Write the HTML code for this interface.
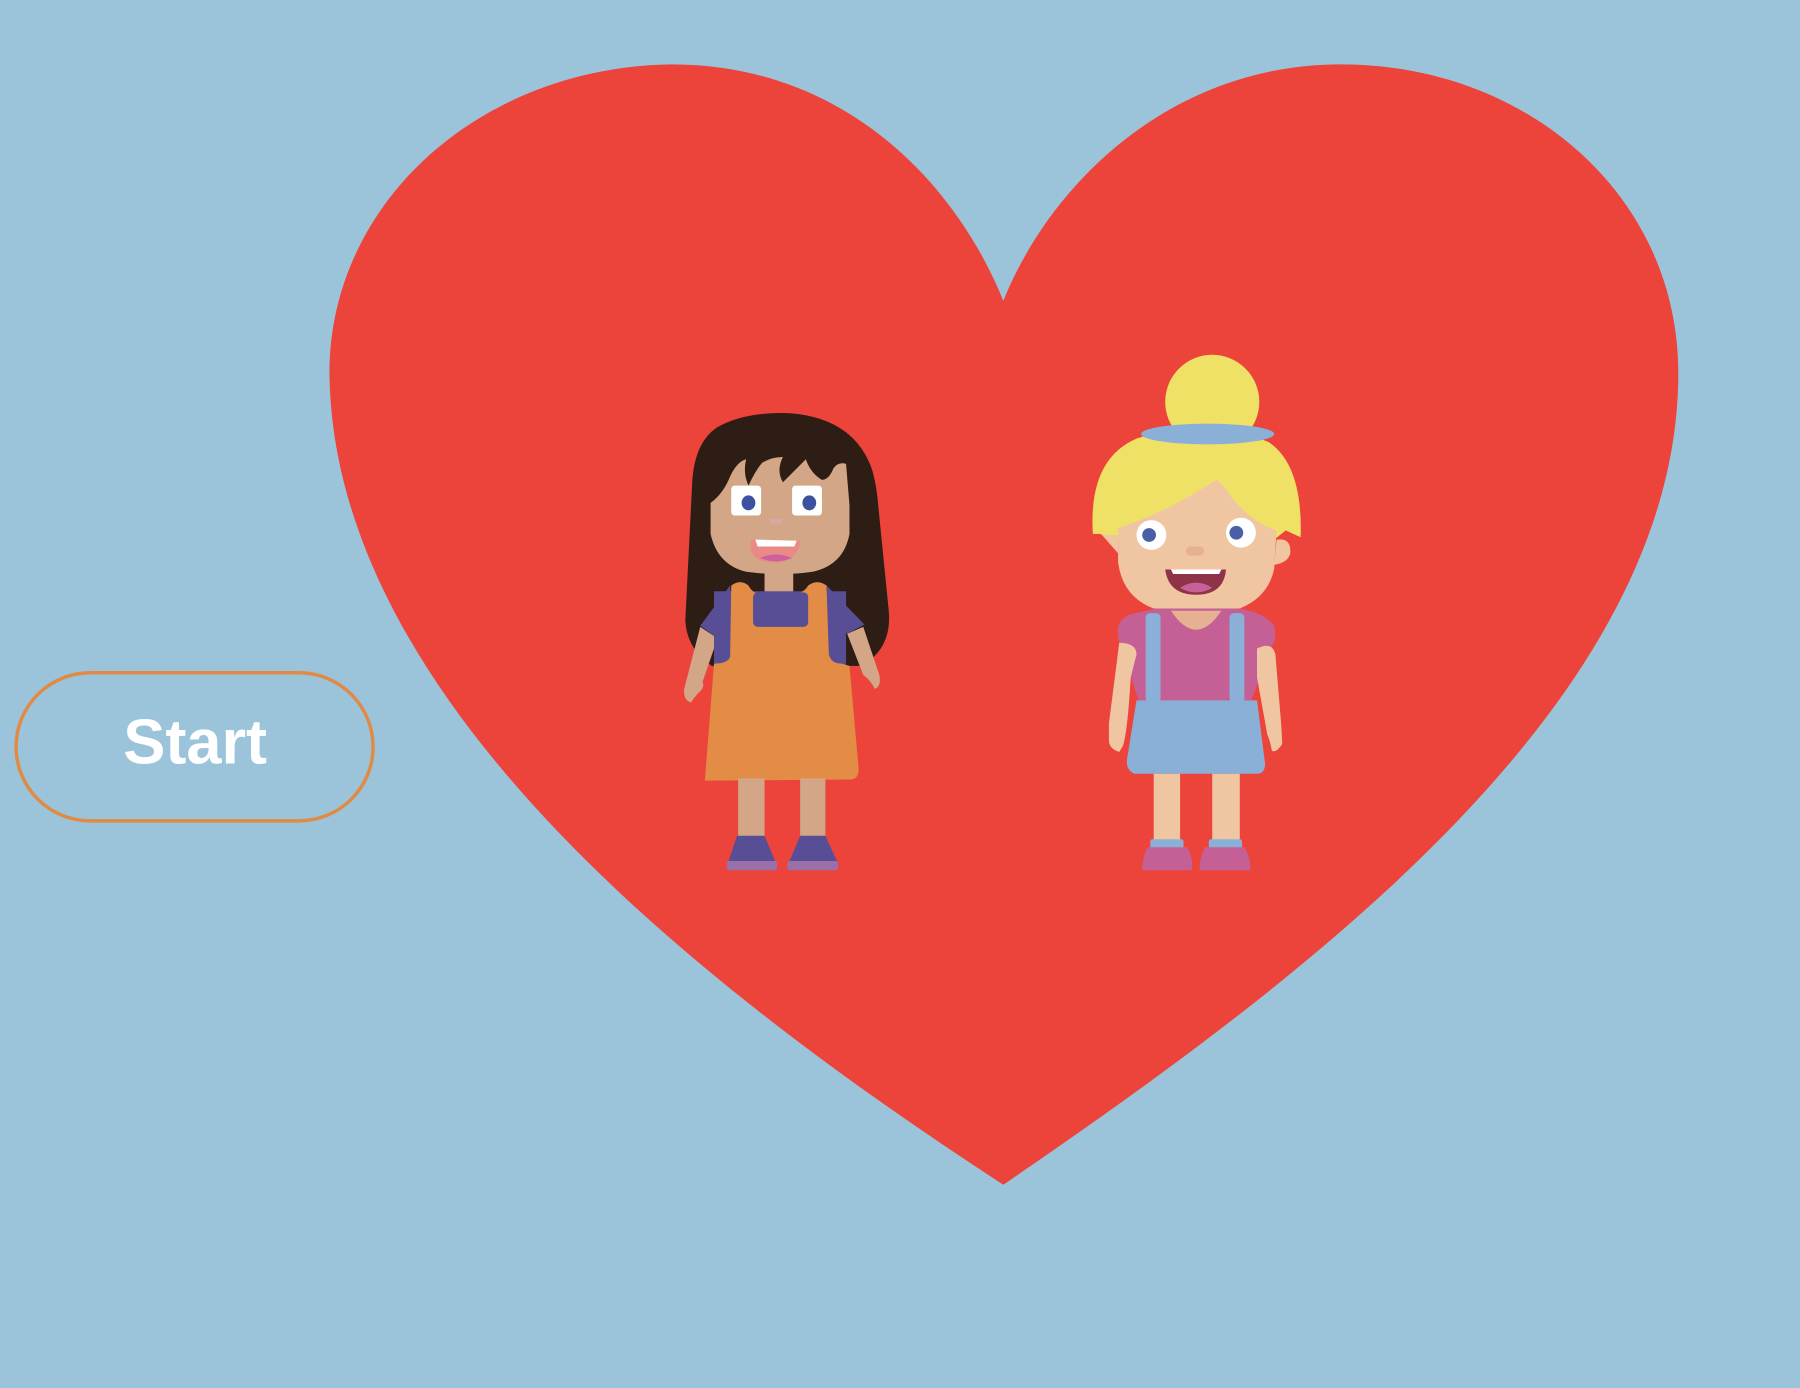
<!DOCTYPE html>
<html><head><meta charset="utf-8"><style>
html,body{margin:0;padding:0;background:#9bc4da;overflow:hidden}
svg{display:block}
</style></head><body>
<svg width="1800" height="1388" viewBox="0 0 1568 1209" xmlns="http://www.w3.org/2000/svg">
<rect width="1568" height="1209" fill="#9bc4da"/>
<path d="M874,262 C835,165 740,56 585,56 C420,58 287,175 287,325 C290,610 610,860 874,1032 C1140,850 1462,610 1462,325 C1462,170 1330,56 1168,56 C1020,56 915,160 874,262 Z" fill="#ec443a"/>
<rect x="14" y="586" width="311" height="129" rx="64.5" fill="none" stroke="#e08a45" stroke-width="3"/>
<text x="170" y="665" text-anchor="middle" font-family="Liberation Sans, sans-serif" font-weight="bold" font-size="55" fill="#fff">Start</text>

<!-- girl 1 -->
<g>
<path d="M603,420 Q605,385 625,372 Q650,358 690,360 Q745,365 760,410 Q764,425 765,440 L774,530 Q778,565 750,580 L620,580 Q598,565 597,540 Z" fill="#2d1d15"/>
<path d="M619,438 Q630,430 636,415 Q642,402 650,400 Q647,412 652,423 Q658,410 664,403 Q672,398 682,398 Q676,410 682,420 L702,400 Q706,412 716,418 Q722,418 726,408 Q730,402 737,404 L740,440 L740,465 Q735,492 708,498 Q680,502 650,498 Q625,492 619,465 Z" fill="#d2a686"/>
<rect x="637" y="423" width="26" height="26" rx="3" fill="#fff"/>
<rect x="690" y="423" width="26" height="26" rx="3" fill="#fff"/>
<ellipse cx="652" cy="438" rx="6" ry="6.5" fill="#3c51a0"/>
<ellipse cx="705" cy="438" rx="6" ry="6.5" fill="#3c51a0"/>
<rect x="671" y="452" width="10" height="4" fill="#dca6a6"/>
<path d="M654,470 L697,471 Q696,488 676,490 Q656,490 654,478 Z" fill="#e98a86"/>
<path d="M658,470 L694,471 L692,476 L660,476 Z" fill="#fff"/>
<path d="M662,486 Q676,480 690,486 Q676,492 662,486 Z" fill="#d0609a"/>
<rect x="666" y="496" width="25" height="22" fill="#d2a686"/>
<path d="M636,510 L610,545 L625,556 L638,540 Z M720,510 L753,544 L738,552 L722,535 Z" fill="#574e95"/>
<path d="M610,546 L625,556 L612,594 Q614,598 610,602 Q604,608 602,612 Q595,610 596,600 Z" fill="#d2a686"/>
<path d="M738,552 L752,546 L766,588 Q768,598 762,600 Q758,592 752,588 Z" fill="#d2a686"/>
<rect x="622" y="515" width="115" height="65" fill="#574e95"/>
<path d="M637,510 Q645,504 652,510 Q656,518 666,518 L690,518 Q700,517 704,510 Q712,504 720,510 L722,570 Q724,578 733,578 L740,580 L748,670 Q748,680 738,679 L614,680 L622,578 Q634,578 636,572 Z" fill="#e38c45"/>
<rect x="656" y="516" width="48" height="30" rx="4" fill="#574e95"/>
<rect x="643" y="678" width="23" height="52" fill="#d2a686"/>
<rect x="697" y="678" width="22" height="52" fill="#d2a686"/>
<path d="M642,728 L666,728 L676,752 L634,752 Z M697,728 L719,728 L730,752 L687,752 Z" fill="#574e95"/>
<rect x="633" y="750" width="44" height="8" rx="2" fill="#9b6fa8"/>
<rect x="686" y="750" width="44" height="8" rx="2" fill="#9b6fa8"/>
</g>

<!-- girl 2 -->
<g>
<circle cx="1056" cy="350" r="41" fill="#efe066"/>
<path d="M952,465 Q948,400 990,382 Q1050,362 1105,385 Q1135,405 1133,468 L1120,462 L1110,470 L970,470 L958,465 Z" fill="#efe066"/>
<ellipse cx="1052" cy="378" rx="58" ry="9" fill="#8ab0d8"/>
<path d="M974,460 Q1010,448 1040,430 L1060,418 Q1068,425 1072,432 Q1090,455 1112,462 L1110,495 Q1105,520 1080,530 L1005,530 Q978,520 974,490 Z" fill="#f0c6a2"/>
<path d="M960,466 L974,482 L974,466 Z" fill="#f0c6a2"/>
<path d="M1112,470 Q1125,468 1124,482 Q1122,490 1110,492 Z" fill="#f0c6a2"/>
<circle cx="1003" cy="466" r="13" fill="#fff"/>
<circle cx="1081" cy="464" r="13" fill="#fff"/>
<circle cx="1001" cy="466" r="6" fill="#4a5fa8"/>
<circle cx="1077" cy="464" r="6" fill="#4a5fa8"/>
<rect x="1033" y="476" width="16" height="8" rx="4" fill="#e6b092"/>
<path d="M1015,496 L1068,496 Q1066,518 1042,518 Q1018,518 1015,496 Z" fill="#8e3348"/>
<path d="M1020,496 L1064,496 L1062,500 L1022,500 Z" fill="#fff"/>
<path d="M1028,512 Q1042,503 1056,512 Q1042,520 1028,512 Z" fill="#c8609a"/>
<path d="M1008,530 L1076,530 Q1100,532 1110,545 Q1112,560 1108,562 L1090,610 L992,610 L975,560 Q970,540 985,535 Z" fill="#c56096"/>
<path d="M1020,532 Q1042,565 1064,532 Z" fill="#e6b092"/>
<path d="M975,560 Q990,560 990,570 L985,590 Q982,640 978,650 L975,655 Q966,652 966,645 L966,630 Z" fill="#f0c6a2"/>
<path d="M1095,565 Q1108,558 1111,570 L1116,630 L1117,648 Q1112,656 1108,654 Q1106,644 1104,640 L1095,590 Z" fill="#f0c6a2"/>
<rect x="998" y="534" width="13" height="78" rx="4" fill="#8ab0d8"/>
<rect x="1071" y="534" width="13" height="78" rx="4" fill="#8ab0d8"/>
<path d="M990,610 L1095,610 L1102,665 Q1102,674 1095,674 L988,674 Q980,670 982,660 Z" fill="#8ab0d8"/>
<rect x="1005" y="674" width="23" height="62" fill="#f0c6a2"/>
<rect x="1056" y="674" width="24" height="62" fill="#f0c6a2"/>
<rect x="1002" y="731" width="29" height="8" rx="2" fill="#8ab0d8"/>
<rect x="1053" y="731" width="29" height="8" rx="2" fill="#8ab0d8"/>
<path d="M1000,738 L1034,738 Q1040,748 1038,758 L995,758 Q995,746 1000,738 Z M1050,738 L1084,738 Q1090,748 1089,758 L1045,758 Q1045,746 1050,738 Z" fill="#c56096"/>
</g>
</svg>
</body></html>
